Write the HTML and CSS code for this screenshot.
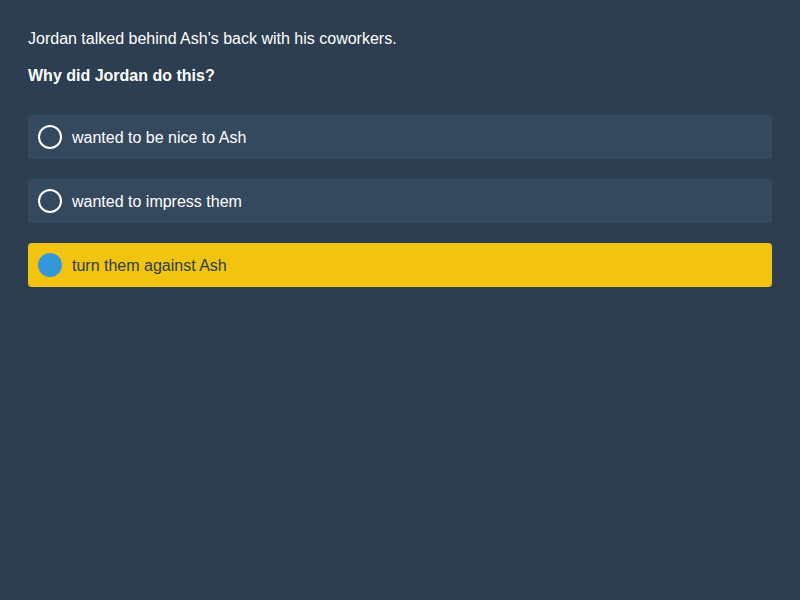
FILE: index.html
```html
<!DOCTYPE html>
<html>
<head>
<meta charset="utf-8">
<link rel="stylesheet" href="styles.css">
</head>
<body>
<main class="quiz">
  <p class="context">Jordan talked behind Ash's back with his coworkers.</p>
  <p class="question">Why did Jordan do this?</p>
  <div class="options">
    <div class="option"><span class="radio"></span><span class="label">wanted to be nice to Ash</span></div>
    <div class="option"><span class="radio"></span><span class="label">wanted to impress them</span></div>
    <div class="option selected"><span class="radio"></span><span class="label">turn them against Ash</span></div>
  </div>
</main>
</body>
</html>
```
FILE: styles.css
```css
html, body {
  margin: 0;
  height: 100%;
  background: #2c3e50;
}
body {
  font-family: "Liberation Sans", Arial, sans-serif;
  font-size: 16px;
  color: #ffffff;
}
.quiz {
  padding: 29px 28px 28px;
  display: flex;
  flex-direction: column;
}
.context, .question {
  margin: 0;
  line-height: 20px;
}
.context {
  margin-bottom: 17px;
}
.question {
  font-weight: bold;
  margin-bottom: 29px;
}
.options {
  display: flex;
  flex-direction: column;
  gap: 20px;
}
.option {
  height: 44px;
  box-sizing: border-box;
  background: #34495e;
  border-radius: 4px;
  display: flex;
  align-items: center;
  padding-left: 10px;
  gap: 10px;
}
.label {
  padding-top: 2px;
}
.radio {
  width: 24px;
  height: 24px;
  box-sizing: border-box;
  border: 2px solid #ffffff;
  border-radius: 50%;
  flex: none;
}
.option.selected {
  background: #f1c40f;
  color: #2c3e50;
}
.option.selected .radio {
  background: #3498db;
  border-color: #3498db;
}
```
